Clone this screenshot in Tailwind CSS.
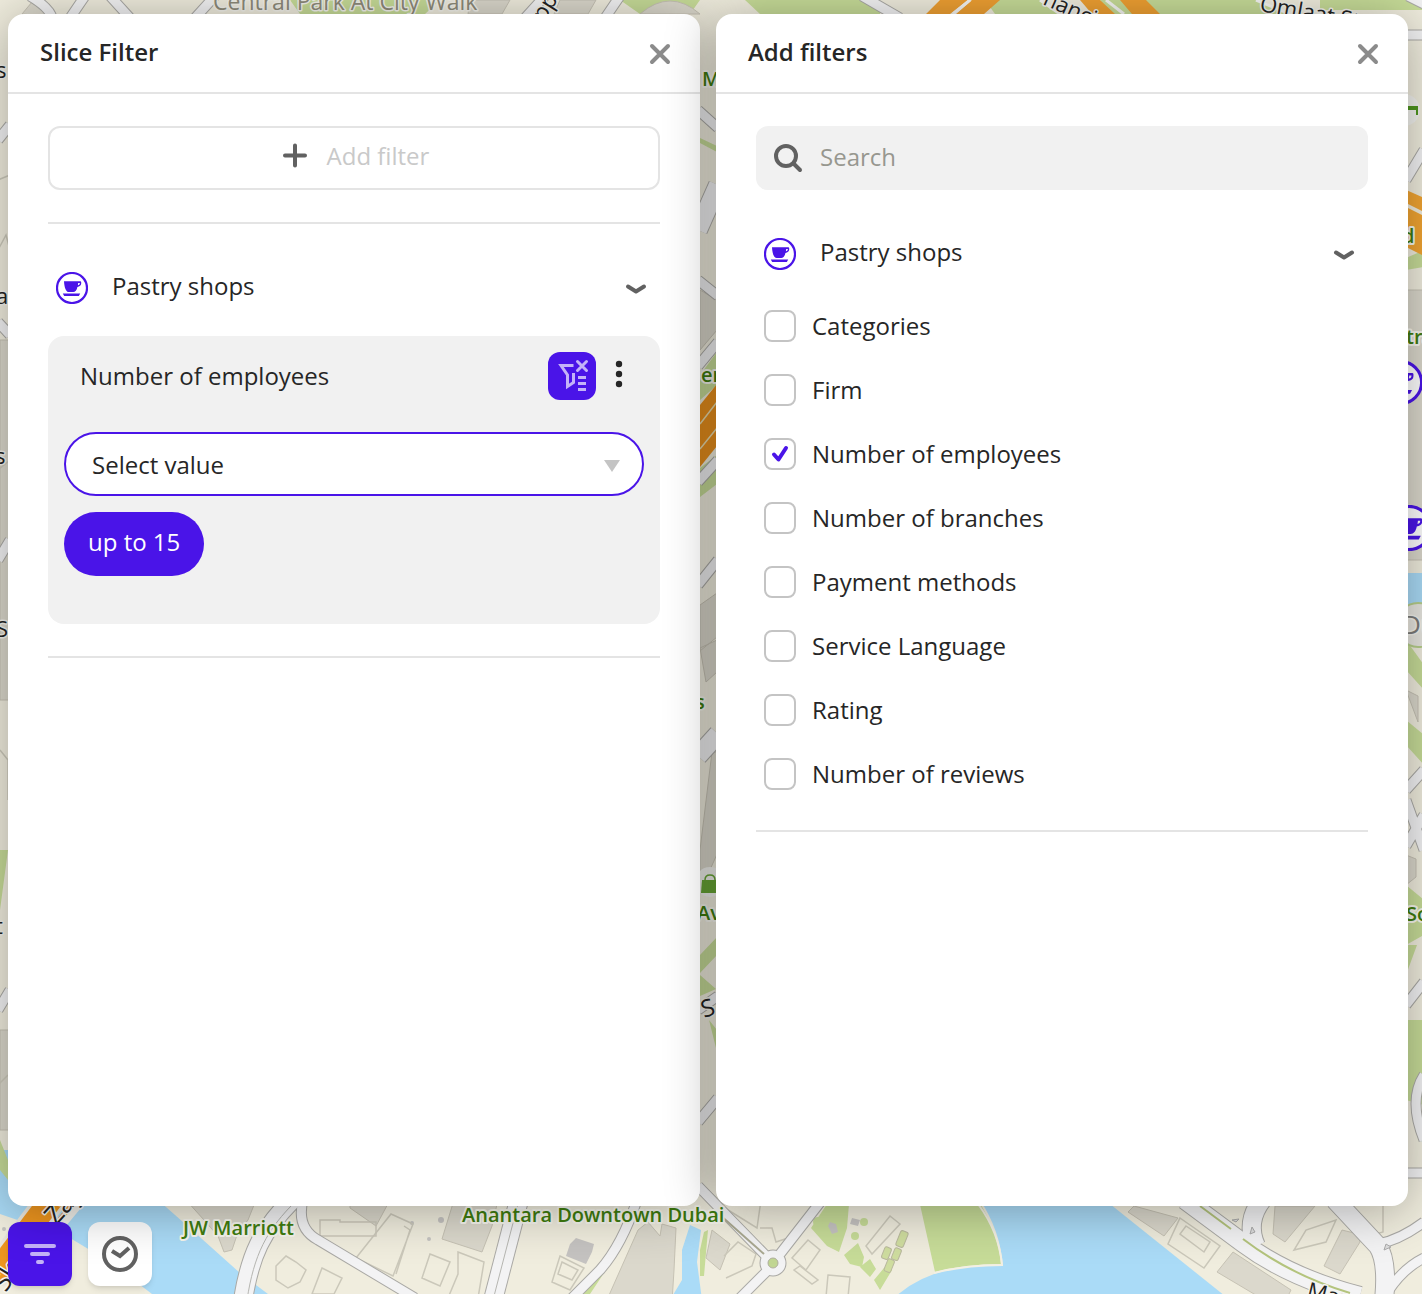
<!DOCTYPE html>
<html lang="en">
<head>
<meta charset="utf-8">
<meta name="viewport" content="width=device-width, initial-scale=1">
<title>Slice Filter</title>
<script src="https://cdn.jsdelivr.net/npm/@tailwindcss/browser@4"></script>
</head>
<body class="relative h-screen overflow-hidden bg-[#eeebdb] font-['Open_Sans','Noto_Sans',sans-serif] text-2xl text-[#262626]">

<svg width="0" height="0" class="absolute" aria-hidden="true">
  <defs>
    <symbol id="cup" viewBox="0 0 32 32">
      <circle cx="16" cy="16" r="15" fill="#fff" stroke="#4a14e8" stroke-width="2.2"/>
      <path d="M8 9.2h16.2a1 1 0 0 1 1 1v1.3c0 2-1.6 3.2-3.8 3.4-.6 3.2-2.2 5.2-4.2 5.2h-4.4C10 20.100 8.300 15.500 8 9.200Z" fill="#4a14e8"/>
      <path d="M22.200 11h1.600c0 1.400-.6 2-1.900 2.200Z" fill="#fff"/>
      <path d="M6.800 21.400h17.400l-1.400 2.600H8.200Z" fill="#4a14e8"/>
    </symbol>
    <symbol id="chevron" viewBox="0 0 32 32">
      <path d="m8 14.500 8 5 8-5" fill="none" stroke="#616161" stroke-width="4" stroke-linecap="round" stroke-linejoin="round"/>
    </symbol>
    <symbol id="close" viewBox="0 0 32 32">
      <path d="m8 9 16 16M24 9 8 25" fill="none" stroke="#8b8b8b" stroke-width="4" stroke-linecap="round"/>
    </symbol>
  </defs>
</svg>

<!-- City map -->
<svg class="absolute inset-0 h-full w-full" viewBox="0 0 1422 1294" preserveAspectRatio="xMinYMin slice" aria-hidden="true">
  <defs>
    <g id="major">
      <path d="M292 1200C262 1230 250 1255 243 1300"/>
      <path d="M519 1200 493 1300"/>
      <path d="M1185 1200 1243 1243Q1290 1278 1360 1296"/>
      <path d="M1262 1200Q1245 1222 1256 1246"/>
      <path d="M1335 1200 1378 1246Q1388 1262 1384 1300"/>
      <path d="M698 756 718 734"/>
      <path d="M698 230 718 185"/>
    </g>
    <g id="minor">
      <path d="M303 1200Q296 1228 318 1240L415 1298"/>
      <path d="M637 1200Q622 1245 600 1270L570 1300"/>
      <path d="M698 1186 773 1263M822 1200 780 1254M768 1270 740 1298"/>
      <path d="M1378 1244Q1400 1240 1424 1222M1424 1258Q1400 1270 1384 1298"/>
      <path d="M698 110 718 128M698 280 718 296M698 366 718 342M698 482 718 460M698 585 718 560M698 1122 718 1098M698 1010 718 996"/>
      <path d="M1406 35H1424M1406 180 1424 150M1406 846 1424 815M1406 1005 1424 982M1406 790 1424 770M1406 800 1424 850M1406 1173H1424M1424 1075Q1408 1100 1424 1140"/>
      <path d="M-2 140 10 125M-2 322 10 335M-2 560 10 540M-2 1010 10 990"/>
      <path d="M30 -4Q50 8 52 18M85 -4 70 18M110 -4 130 18M215 -4 195 18M545 -4 525 18M620 -4 605 18M862 -4 900 18M1408 -4 1424 4"/>
    </g>
  </defs>

  <rect width="1422" height="1294" fill="#f0edde"/>

  <!-- Water -->
  <g fill="#aadbf7">
    <path d="M0 1150V1214L70 1238 110 1262 152 1294H268L240 1273 183 1222 158 1200V1150Z"/>
    <path d="M980 1200Q1000 1230 1003 1266 930 1262 892 1300H1230L1100 1196Z"/>
    <path d="M690 1225 701 1230 697 1262 702 1300H670L682 1280V1250Z"/>
    <path d="M1400 573H1424V604H1400Z"/>
    <circle cx="1424" cy="1137" r="5"/>
  </g>

  <!-- Parks -->
  <g fill="#c7dc98">
    <path d="M919 1200H978Q998 1232 1001 1264 965 1264 935 1272Z"/>
    <path d="m811 1228 16-24h22l-2 24-8 24-12-6Z"/>
    <path d="m844 1255 14-12 6 14-2 10-12-3ZM860 1267l10-8 6 10-6 8ZM874 1280l10-12 8 2-12 20Z"/>
    <circle cx="818" cy="1222" r="5"/><circle cx="855" cy="1236" r="4"/><circle cx="864" cy="1222" r="4"/>
    <path d="m578 1294 14-16 18-24 4 2-12 20-12 18ZM700 1250l4-18 4-2-4 46h-4Z"/>
    <path d="M700 138 717 146V152L700 143ZM700 375 717 352V385L700 400ZM700 468 717 455V484L700 497ZM700 955 717 937V955L700 973ZM700 975l16 14-16 7ZM709 1020l8 10v22Z"/>
    <path d="M290 0H440L425 14H300ZM620 0H700L690 14H640ZM745 0H880V14H760ZM985 0H1040L1060 14H995ZM1100 0H1260L1290 14H1110ZM1320 0H1424V10H1320Z"/>
    <path d="M1406 258 1424 250V267L1406 270ZM1406 640 1424 665V690L1406 670ZM1406 720 1424 735V765L1406 745ZM1406 885 1424 900V935L1406 945ZM1406 945h11l-11 30ZM1406 1020H1424V1105L1406 1100Z"/>
    <path d="M0 850H8L0 910ZM0 1140 8 1160V1180L0 1170Z"/>
  </g>

  <!-- Buildings -->
  <g fill="#dbd8cc" stroke="#c6c2b4" stroke-width="1">
    <path d="M186 1200h70l-8 20-10 12-6 18-8 2-6-16-14-16Z"/>
    <path d="M350 1200h40l-14 26-26-18ZM454 1200h44l-6 26-10 26-40-13Z"/>
    <path d="M638 1230l10-8 12 14 2-12 14 4-2 42-2 32h-66Z"/>
    <path d="M712 1230l18 14-10 26-14-12Z"/>
    <path d="M1134 1206l44 12-14 18-36-24ZM1233 1252l58 38-10 20-64-38ZM1275 1206h40l-30 36-12-8ZM1342 1230l16 4 2 8-20 32-16-8Z"/>
    <path d="M700 290 717 300V330L700 350ZM700 648 717 640V672L706 682ZM712 752h6v100l-18 40V850ZM700 605l17-12v44l-17 14Z"/>
    <path d="M1406 290H1424V560H1406ZM1406 855l10 4v18l-10 8ZM1406 690l12 6v26Z"/>
    <path d="M0 340H9V700H0ZM0 1030H9V1130H0Z"/>
    <path d="M640 14Q670-12 700 14ZM22 14l10-12 18 6-6 8ZM470 0h40l-8 14h-34ZM560 0h36l-8 14h-34Z"/>
  </g>
  <g fill="#c5c3c1">
    <path d="m576 1238 18 6-2 8-6 12-20-8 4-12ZM830 1222l6 2 2 8-6 2-4-8ZM852 1218l8 2-2 6-8-2Z"/>
    <circle cx="441" cy="1220" r="3"/><circle cx="429" cy="1239" r="2"/><circle cx="412" cy="1223" r="2"/><circle cx="4" cy="1229" r="2"/>
  </g>
  <g fill="none" stroke="#cbc8ba" stroke-width="1.500">
    <path d="m391 1214 22 10-20 52-37-18ZM404 1226l6 4-14 44M430 1254l20 8-10 24-18-8ZM458 1252l26 10-6 36h-30l10-24Z"/>
    <path d="m560 1256 24 12-14 22-18-8ZM562 1262l16 8-6 10-14-6ZM808 1240l12 10-14 20-14-12ZM800 1266l18 14-6 4-18-14ZM828 1275l22 2-2 20h-22ZM890 1216l10 8-28 30-6-8Z"/>
    <path d="m1180 1218 40 28-16 22-36-24ZM1186 1226l24 16-6 10-24-18ZM1336 1220l-10 22-32 8 12-20Z"/>
    <path d="m286 1256 10 6 10 8-6 12-12 6-12-8v-14ZM322 1268l20 10-8 16h-22ZM340 1222h36v14h-56v-16h20Z"/>
    <path d="M712 1200l45 28 4-28M760 1228l12 0 4 14 12-4 26-30M724 1256l14-14 18 12-4 12-26 12M1345 1206l24 30 14-4V1200"/>
    <path d="M-2 180 10 175M-2 250 6 235 10 250M-2 470 10 460M0 750 8 760V800M-2 1085 8 1075"/>
  </g>
  <g fill="#cfdd9f" stroke="#b9b99d">
    <rect x="898" y="1231" width="8" height="16" rx="2" transform="rotate(22 902 1239)"/>
    <rect x="883" y="1247" width="7" height="12" rx="2" transform="rotate(22 886 1253)"/>
    <rect x="893" y="1248" width="7" height="12" rx="2" transform="rotate(22 896 1254)"/>
    <rect x="886" y="1259" width="7" height="13" rx="2" transform="rotate(22 889 1265)"/>
  </g>

  <!-- Streets: casing first, then surface -->
  <g fill="none" stroke="#aaa9a5">
    <use href="#minor" stroke-width="11"/><use href="#major" stroke-width="20"/>
    <circle cx="773" cy="1263" r="8" stroke-width="11"/>
  </g>
  <g fill="none" stroke="#f3f3f4">
    <use href="#minor" stroke-width="9"/><use href="#major" stroke-width="18"/>
    <circle cx="773" cy="1263" r="8" stroke-width="9"/>
  </g>
  <g fill="none" stroke="#b6b6b1">
    <path d="M297 1200C266 1230 254 1255 247 1300M519 1200 493 1300"/>
    <path d="M1200 1206 1231 1229M1243 1239Q1290 1275 1350 1293" stroke="#b4c47d" stroke-width="2"/>
    <path d="M720 1215 764 1254" stroke="#a9a891" stroke-width="2"/>
    <path d="M978 1204Q999 1232 1002 1265 965 1265 934 1273" stroke="#f3f0e4" stroke-width="2"/>
  </g>
  <circle cx="773" cy="1263" r="5" fill="#c1d692" stroke="#b0af9f"/>
  <path d="m1232 1220 7-1-3 3ZM1250 1234l2-7 3 5ZM1384 1250l2-6 5 3Z" fill="#ddd" stroke="#aaa"/>

  <!-- Highways -->
  <g>
    <path d="M54 1196-8 1278" stroke="#e9e6dc" stroke-width="30"/>
    <path d="M54 1196-8 1278" stroke="#ed951f" stroke-width="23"/>
    <path d="M80 1202 40 1250" stroke="#f2f0ea" stroke-width="9"/>
    <path d="M74 1202 40 1244" stroke="#ed951f" stroke-width="5"/>
    <path d="M700 405 717 384V446L700 467Z" fill="#e88f1c"/>
    <path d="M700 424 717 402M700 449 717 428" stroke="#e9dcae" stroke-width="1.500"/>
    <path d="M1404 189 1424 198V212L1404 202ZM1404 206 1424 216V256L1404 246Z" fill="#f2a532"/>
    <path d="M940 0H968L950 14H926ZM972 0H1000L984 14H956ZM1080 0H1100L1115 14H1092ZM1120 0H1146L1160 14H1132Z" fill="#efa032"/>
    <path d="M970 0 953 14M1040 0 1060 14M1106 0 1124 14M1256 0 1290 14" stroke="#f5f5f3" stroke-width="3"/>
  </g>

  <!-- Points of interest -->
  <circle cx="710" cy="882" r="15" fill="#f2f2ee"/>
  <path d="M702 880h16v13h-17Z" fill="#68a635"/>
  <path d="M705 880q0-5 5-5t5 5" fill="none" stroke="#68a635" stroke-width="1.500"/>
  <circle cx="1404" cy="110" r="16" fill="#f2f2ee"/>
  <path d="M1406 106h12v9h-2v-5h-10Z" fill="#4e951f"/>
  <circle cx="1418" cy="625" r="22" fill="#e8e7e0" stroke="#b7cf8b" stroke-width="2"/>
  <use href="#cup" x="1378" y="360" width="45" height="45"/>
  <use href="#cup" x="1386" y="505" width="46" height="46"/>

  <!-- Labels -->
  <g class="font-semibold" stroke="#f7f6ee" stroke-width="4" stroke-linejoin="round" paint-order="stroke" fill="#3f7d0f" font-size="20">
    <text x="183" y="1235">JW Marriott</text>
    <text x="462" y="1222">Anantara Downtown Dubai</text>
    <text x="702" y="86">Mall</text>
    <text x="701" y="382">er</text>
    <text x="697" y="920">Ave</text>
    <text x="1402" y="243">d</text>
    <text x="1406" y="344">tra</text>
    <text x="1406" y="921">So</text>
    <text x="695" y="709">s</text>
  </g>
  <g stroke="#f4f3ec" stroke-width="3" stroke-linejoin="round" paint-order="stroke" font-size="22">
    <text x="213" y="10" fill="#8e8b7a" font-size="23">Central Park At City Walk</text>
    <text x="1402" y="634" fill="#7d7d7b" font-size="26">Du</text>
    <g fill="#222">
      <text transform="translate(1259 11) rotate(10)" font-size="22">Omlaat St</text>
      <text transform="translate(1042 4) rotate(24)" font-size="22">nancial</text>
      <text transform="translate(544 22) rotate(-58)" font-size="22">ppiness</text>
      <text transform="translate(56 1226) rotate(-48)" font-size="26">Zay</text>
      <text transform="translate(6 1293) rotate(-58)" font-size="26">Sk</text>
      <text transform="translate(1306 1297) rotate(14)" font-size="22">Marasi</text>
      <text transform="translate(704 1018) rotate(-18)" font-size="24">S</text>
      <text x="-4" y="304">a</text><text x="-5" y="464">s</text><text x="-4" y="637">S</text><text x="-5" y="934">t</text><text x="-4" y="78">s</text>
    </g>
  </g>
</svg>

<main class="relative flex h-full flex-col gap-4 pt-3.5 pr-3.5 pb-2 pl-2">
  <div class="relative z-10 flex min-h-0 flex-1 gap-4">

    <section class="flex min-w-0 flex-1 flex-col rounded-2xl bg-white shadow-[0_4px_52px_rgba(0,0,0,0.32)]" aria-labelledby="slice-title">
      <header class="flex h-20 shrink-0 items-center justify-between border-b-2 border-[#e4e4e4] pr-4 pl-8">
        <h1 id="slice-title" class="pb-0.5 font-semibold">Slice Filter</h1>
        <button type="button" aria-label="Close" class="grid size-12 place-items-center"><svg class="size-8"><use href="#close"/></svg></button>
      </header>
      <div class="px-10 pt-8">
        <button type="button" class="flex h-16 w-full items-center justify-center gap-4 rounded-xl border-2 border-[#e4e4e4] pb-1 text-[#c9c9c9]">
          <svg class="size-8" viewBox="0 0 32 32"><path d="M16 5.500v20M6 15.500h20" stroke="#616161" stroke-width="4" stroke-linecap="round"/></svg>
          Add filter
        </button>
        <hr class="mt-8 border-t-2 border-[#e4e4e4]">
        <button type="button" aria-expanded="true" class="mt-8 flex h-16 w-full items-center gap-6 px-2 text-left">
          <svg class="size-8"><use href="#cup"/></svg>
          <span class="flex-1 pb-1">Pastry shops</span>
          <svg class="size-8"><use href="#chevron"/></svg>
        </button>
        <div class="mt-4 rounded-2xl bg-[#f1f1f1] px-4 pt-4 pb-12">
          <div class="flex h-12 items-center">
            <label for="employees" class="flex-1 pl-4">Number of employees</label>
            <button type="button" aria-label="Clear filter" class="size-12 rounded-xl bg-[#4a14e8]">
              <svg viewBox="0 0 48 48" fill="none" stroke="#c4b3f8" stroke-width="3">
                <path d="M25.500 13.500H13L19.500 23V34.500L25.500 30.500V21M30 25.500h8M30 31.500h8M30 37.500h8"/>
                <path d="m29.500 9.500 9 9M38.500 9.500l-9 9" stroke-linecap="round"/>
              </svg>
            </button>
            <button type="button" aria-label="More options" class="size-12">
              <svg viewBox="0 0 48 48" fill="#262626"><circle cx="23" cy="12" r="3.200"/><circle cx="23" cy="22" r="3.200"/><circle cx="23" cy="32" r="3.200"/></svg>
            </button>
          </div>
          <div class="relative mt-8">
            <select id="employees" class="h-16 w-full appearance-none rounded-full border-2 border-[#4a14e8] bg-white px-[26px] pt-0.5">
              <option>Select value</option>
            </select>
            <svg class="pointer-events-none absolute top-6 right-6 size-4" viewBox="0 0 16 16"><path d="M0 4h16L8 16Z" fill="#c4c4c4"/></svg>
          </div>
          <button type="button" class="mt-4 flex h-16 items-center rounded-full bg-[#4a14e8] px-6 pb-1 text-white">up to 15</button>
        </div>
        <hr class="mt-8 border-t-2 border-[#e4e4e4]">
      </div>
    </section>

    <section class="flex min-w-0 flex-1 flex-col rounded-2xl bg-white shadow-[0_4px_52px_rgba(0,0,0,0.32)]" aria-labelledby="add-title">
      <header class="flex h-20 shrink-0 items-center justify-between border-b-2 border-[#e4e4e4] pr-4 pl-8">
        <h2 id="add-title" class="pb-0.5 font-semibold">Add filters</h2>
        <button type="button" aria-label="Close" class="grid size-12 place-items-center"><svg class="size-8"><use href="#close"/></svg></button>
      </header>
      <div class="px-10 pt-8">
        <label class="flex h-16 items-center gap-4 rounded-xl bg-[#f1f1f1] px-4">
          <svg class="size-8 shrink-0" viewBox="0 0 32 32" fill="none" stroke="#616161"><circle cx="14" cy="14" r="10" stroke-width="4"/><path d="m21.500 21.500 6.500 6.500" stroke-width="4" stroke-linecap="round"/></svg>
          <input type="search" aria-label="Search" placeholder="Search" class="min-w-0 flex-1 bg-transparent pb-0.5 outline-none placeholder:text-[#97978f]">
        </label>
        <button type="button" aria-expanded="true" class="mt-8 flex h-16 w-full items-center gap-6 px-2 text-left">
          <svg class="size-8"><use href="#cup"/></svg>
          <span class="flex-1 pb-1">Pastry shops</span>
          <svg class="size-8"><use href="#chevron"/></svg>
        </button>
        <ul class="mt-2">
          <li><label class="flex h-16 items-center gap-4 px-2"><input type="checkbox" class="size-8 appearance-none rounded-lg border-2 border-[#c4c4c4]">Categories</label></li>
          <li><label class="flex h-16 items-center gap-4 px-2"><input type="checkbox" class="size-8 appearance-none rounded-lg border-2 border-[#c4c4c4]">Firm</label></li>
          <li><label class="flex h-16 items-center gap-4 px-2">
            <span class="grid size-8">
              <input type="checkbox" checked class="peer col-start-1 row-start-1 size-8 appearance-none rounded-lg border-2 border-[#c4c4c4]">
              <svg class="pointer-events-none invisible col-start-1 row-start-1 size-8 peer-checked:visible" viewBox="0 0 32 32"><path d="m10 16.500 4.500 5 7.500-11.500" fill="none" stroke="#4a14e8" stroke-width="4" stroke-linecap="round" stroke-linejoin="round"/></svg>
            </span>Number of employees</label></li>
          <li><label class="flex h-16 items-center gap-4 px-2"><input type="checkbox" class="size-8 appearance-none rounded-lg border-2 border-[#c4c4c4]">Number of branches</label></li>
          <li><label class="flex h-16 items-center gap-4 px-2"><input type="checkbox" class="size-8 appearance-none rounded-lg border-2 border-[#c4c4c4]">Payment methods</label></li>
          <li><label class="flex h-16 items-center gap-4 px-2"><input type="checkbox" class="size-8 appearance-none rounded-lg border-2 border-[#c4c4c4]">Service Language</label></li>
          <li><label class="flex h-16 items-center gap-4 px-2"><input type="checkbox" class="size-8 appearance-none rounded-lg border-2 border-[#c4c4c4]">Rating</label></li>
          <li><label class="flex h-16 items-center gap-4 px-2"><input type="checkbox" class="size-8 appearance-none rounded-lg border-2 border-[#c4c4c4]">Number of reviews</label></li>
        </ul>
        <hr class="mt-6 border-t-2 border-[#e4e4e4]">
      </div>
    </section>
  </div>

  <nav class="flex gap-4" aria-label="Map tools">
    <button type="button" aria-label="Filters" class="size-16 rounded-xl bg-[#4a14e8] shadow-md">
      <svg viewBox="0 0 64 64" stroke="#c4b3f8" stroke-width="4" stroke-linecap="round"><path d="M18 24h28M24 32h16M30 40h4"/></svg>
    </button>
    <button type="button" aria-label="Time" class="size-16 rounded-xl bg-white shadow-md">
      <svg viewBox="0 0 64 64" fill="none" stroke="#616161" stroke-width="4"><circle cx="32" cy="32" r="16"/><path d="m24 29 8 5 9-8"/></svg>
    </button>
  </nav>
</main>
</body>
</html>
